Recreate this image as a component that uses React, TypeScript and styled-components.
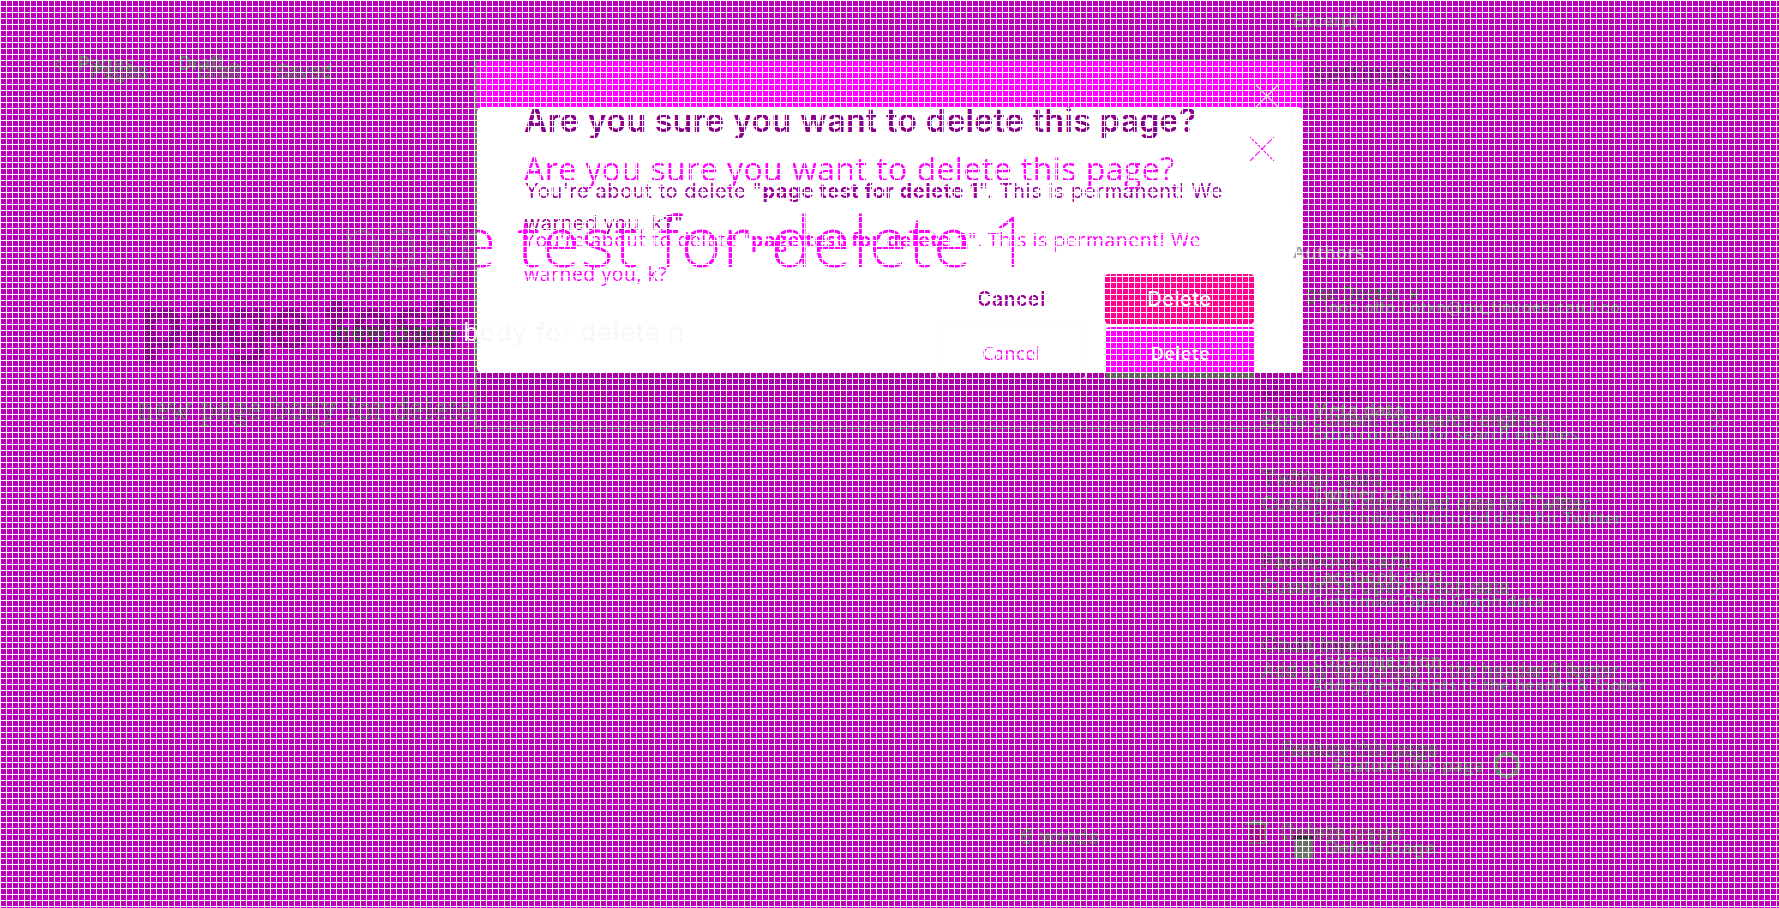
import React from "react";
import styled, { createGlobalStyle, css } from "styled-components";

const Global = createGlobalStyle`
  body { margin: 0; background: #b800b8; overflow: hidden; }
  * { box-sizing: border-box; }
`;

const gray = "#687268";
const plum = "#8b008b";

const Screen = styled.main`
  display: grid;
  width: 1779px;
  height: 908px;
  overflow: hidden;
  background: #b800b8;
  font-family: Inter, sans-serif;
`;

const Layer = styled.section<{ $top?: number; $left?: number }>`
  grid-area: 1 / 1;
  display: flex;
  flex-direction: column;
  align-items: flex-start;
  min-width: 0;
  padding: ${(p) => p.$top ?? 0}px 0 0 ${(p) => p.$left ?? 0}px;
`;

const Mesh = styled.div`
  grid-area: 1 / 1;
  z-index: 5;
  pointer-events: none;
  background-image: linear-gradient(90deg, #fff 1px, transparent 1px), linear-gradient(#fff 1px, transparent 1px);
  background-size: 6px 6px;
`;

type TextProps = {
  $size: number;
  $line: number;
  $weight?: number;
  $color?: string;
  $family?: string;
  $space?: number;
  $mt?: number;
  $ml?: number;
  $outline?: string;
};

const Text = styled.div<TextProps>`
  white-space: pre;
  font-size: ${(p) => p.$size}px;
  line-height: ${(p) => p.$line}px;
  height: ${(p) => p.$line}px;
  font-weight: ${(p) => p.$weight ?? 400};
  color: ${(p) => p.$color ?? gray};
  font-family: ${(p) => p.$family ?? "Inter"}, sans-serif;
  letter-spacing: ${(p) => p.$space ?? 0}px;
  margin: ${(p) => p.$mt ?? 0}px 0 0 ${(p) => p.$ml ?? 0}px;
  ${(p) => p.$outline && css`-webkit-text-stroke: 0.9px ${p.$outline};`}
`;

const BigTitle = styled(Text)`
  color: transparent;
  background: linear-gradient(90deg, #9a389a 138px, #ff00ff 138px);
  background-clip: text;
  -webkit-background-clip: text;
`;

const Row = styled.div<{ $gap?: number; $mt?: number }>`
  display: flex;
  align-items: center;
  gap: ${(p) => p.$gap ?? 0}px;
  margin-top: ${(p) => p.$mt ?? 0}px;
`;

const Shade = styled.div`
  width: 828px;
  height: 370px;
  border: 1px solid ${gray};
  border-left-width: 2px;
  border-right: 0;
  background: linear-gradient(#b800b8 313px, #a800a8 313px, #b800b8);
`;

const Sheet = styled.div<{ $fill: string; $height: number }>`
  width: 826px;
  height: ${(p) => p.$height}px;
  background: ${(p) => p.$fill};
  border-radius: 5px;
`;

const Button = styled.div<{ $fill?: string; $color: string; $h: number; $weight: number; $family?: string; $size: number; $border?: string }>`
  width: 149px;
  height: ${(p) => p.$h}px;
  display: flex;
  justify-content: center;
  border-radius: 4px;
  background: ${(p) => p.$fill ?? "transparent"};
  color: ${(p) => p.$color};
  font: ${(p) => p.$weight} ${(p) => p.$size}px/${(p) => p.$h}px ${(p) => p.$family ?? "Inter"}, sans-serif;
  box-shadow: ${(p) => (p.$border ? `inset 0 0 0 1px ${p.$border}` : "none")};
  letter-spacing: 0.5px;
`;

const Group = styled.div`
  height: 83.5px;
`;

const FaintBox = styled.div<{ $w: number; $h: number; $mt?: number }>`
  width: ${(p) => p.$w}px;
  height: ${(p) => p.$h}px;
  margin-top: ${(p) => p.$mt ?? 0}px;
  border: 1px solid rgba(130, 130, 130, 0.05);
  border-radius: 5px;
`;

const PanelIcon = styled.div`
  width: 24px;
  height: 21px;
  border: 1px solid #960096;
  border-right: 6px solid #850085;
`;

const Ring = styled.div`
  width: 26px;
  height: 26px;
  margin: 0 0 0 10px;
  border: 4px solid ${gray};
  border-radius: 50%;
  outline: 1px solid rgba(255, 255, 255, 0.2);
`;

const Block = styled.div`
  width: 19px;
  height: 23px;
  background: linear-gradient(#333 3px, ${gray} 3px);
`;

const Cross = ({ size, color, width = 1 }: { size: number; color: string; width?: number }) => (
  <svg width={size} height={size} viewBox="0 0 24 24" fill="none" stroke={color} strokeWidth={width} style={{ display: "block" }}>
    <path d="M0 0L24 24M24 0L0 24" />
  </svg>
);

const Chevrons = styled.div`
  display: flex;
  flex-direction: column;
  gap: 61.5px;
`;

const Chevron = ({ color, back }: { color: string; back?: boolean }) => (
  <svg width="11" height="22" viewBox="0 0 11 22" fill="none" stroke={color} strokeWidth="1.2" style={{ display: "block" }}>
    <path d={back ? "M10 1L1 11L10 21" : "M1 1L10 11L1 21"} />
  </svg>
);

const Trash = () => (
  <svg width="24" height="24" viewBox="0 0 24 24" fill="none" stroke={gray} strokeWidth="1.5">
    <path fill="#b00090" d="M4 4H20V23H4Z" />
    <path d="M0 4H24M7 4V1H17V4M9 8V19M15 8V19" />
  </svg>
);

const Help = () => (
  <svg width="24" height="24" viewBox="0 0 24 24" fill="none" stroke="#8a408a" strokeDasharray="2 3">
    <circle cx="12" cy="12" r="11" />
    <path d="M9 9C9 5 15 5 15 9C15 12 12 11 12 15M12 17V19" />
  </svg>
);

const Corners = () => (
  <svg width="28" height="26" viewBox="0 0 28 26" fill="none" stroke={gray}>
    <path d="M1 6Q1 1 6 1M22 1Q27 1 27 6M27 20Q27 25 22 25M6 25Q1 25 1 20" />
  </svg>
);

const settings = [
  ["Meta data", "Extra content for search engines"],
  ["Twitter card", "Customize structured data for Twitter"],
  ["Facebook card", "Customize Open Graph data"],
  ["Code injection", "Add styles/scripts to the header & footer"],
];

export default function App() {
  return (
    <>
      <Global />
      <Screen>
        <Layer $top={53} $left={55}>
          <Row $gap={8}>
            <Chevron color={gray} back />
            <Text $size={19} $line={22} $weight={600} $ml={4}>Pages</Text>
            <Text $size={19} $line={22} $weight={600} $ml={36}>Draft</Text>
          </Row>
          <Text $size={71} $line={80} $weight={700} $color={plum} $mt={207} $ml={85} $space={-1}>page test</Text>
          <Text $size={31} $line={40} $family="'Liberation Serif'" $outline={gray} $color={plum} $mt={27} $ml={83} $space={0.9}>new page body for delete</Text>
        </Layer>
        <Layer $top={60} $left={91}>
          <Row $gap={49}>
            <Text $size={19} $line={24} $color={plum} $outline={gray} $space={0.4}>Pages</Text>
            <Text $size={19} $line={24} $color={plum} $outline={gray}>Draft</Text>
            <Text $size={19} $line={24} $color={plum} $outline={gray} $ml={-28}>- Saved</Text>
          </Row>
        </Layer>

        <Layer $top={59} $left={475}><Shade /></Layer>
        <Layer $top={60} $left={477}><Sheet $fill="#ff00ff" $height={60} /></Layer>
        <Layer $top={107} $left={477}><Sheet $fill="#fff" $height={266} /></Layer>
        <Layer $top={107} $left={1292}>
          <FaintBox $w={28} $h={97} />
          <FaintBox $w={155} $h={58} $mt={72} />
        </Layer>

        <Layer $top={199} $left={340}>
          <BigTitle $size={70} $line={82} $weight={300} $family="'Open Sans'" $space={1.05}>page test for delete 1</BigTitle>
        </Layer>
        <Layer $top={317} $left={335}>
          <Row>
            <Text $size={24.5} $line={30} $weight={700} $color="#4a404a" $space={0.7}>new page </Text>
            <Text $size={25} $line={30} $color="#f8f3f8" $space={1.2}>body for delete n</Text>
          </Row>
        </Layer>

        <Layer $top={101} $left={524}>
          <Text $size={32} $line={40} $weight={600} $color="#8a008a" $space={0.4}>Are you sure you want to delete this page?</Text>
          <Text $size={20} $line={32} $color="#a000a0" $mt={34} $ml={1} $space={0.6}>You're about to delete "<b>page test for delete 1</b>". This is permanent! We</Text>
          <Text $size={20} $line={32} $color="#a000a0" $space={0.4}>warned you, k?"</Text>
        </Layer>
        <Layer $top={149} $left={524}>
          <Text $size={32} $line={40} $family="'Open Sans'" $weight={500} $color="#ff00ff" $space={0.45}>Are you sure you want to delete this page?</Text>
          <Text $size={19.4} $line={34} $family="'Open Sans'" $color="#ff00ff" $mt={34} $space={0.57}>You're about to delete "<b>page test for delete 1</b>". This is permanent! We</Text>
          <Text $size={19.4} $line={34} $family="'Open Sans'" $color="#ff00ff" $space={0.57}>warned you, k?</Text>
        </Layer>
        <Layer $top={274} $left={937}>
          <Row $gap={19}>
            <Button $h={50} $size={19.5} $weight={600} $color="#9a009a">Cancel</Button>
            <Button $h={50} $size={20} $weight={500} $fill="#ff0090" $color="#fff">Delete</Button>
          </Row>
          <Row $gap={20} $mt={3}>
            <Button $h={52} $size={18} $weight={400} $color="#ff00ff" $border="#fafafc" $family="'Open Sans'">Cancel</Button>
            <Button $h={52} $size={18} $weight={600} $fill="linear-gradient(#ff00ff 2px, #fff 2px, #fff 3px, #ff00ff 3px, #ff00ff 45px, #606060 45px)" $color="#fff" $family="'Open Sans'">Delete</Button>
          </Row>
        </Layer>
        <Layer $top={85} $left={1256}><Cross size={22} color="#d9e4d9" width={1.5} /></Layer>
        <Layer $top={137} $left={1250}><Cross size={24} color="#ff00ff" width={1.2} /></Layer>

        <Layer $top={10} $left={1293}>
          <Text $size={17.5} $line={22} $weight={600} $color="#787078">Excerpt</Text>
          <Row $mt={27} $gap={281}>
            <Text $size={24} $line={30} $weight={700} $color={plum} $outline="#80407f" $ml={20} $space={0.8}>settings</Text>
            <PanelIcon />
          </Row>
          <Text $size={18} $line={24} $family="'Open Sans'" $weight={600} $color="#a0a0a0" $mt={151} $space={0.3}>Authors</Text>
          <Text $size={18} $line={22} $weight={600} $color="#505850" $mt={19} $ml={13}>gsc Dost.o  ×</Text>
          <Text $size={16} $line={18} $weight={500} $color="#757a75" $ml={26} $mt={-7} $space={0.5}>Jooo.otto.Lotxn@pu_finvoes.cau.l.co</Text>
        </Layer>

        <Layer $top={381} $left={1262}>
          {settings.map(([title, note], i) => (
            <Group key={title}>
              <Text $size={20} $line={26} $weight={600} $color={plum} $outline={i ? gray : undefined} $space={0.5}>{title}</Text>
              <Text $size={18} $line={26} $color={plum} $outline={gray} $space={0.3}>{note}</Text>
            </Group>
          ))}
          <Row $gap={10} $mt={22}>
            <Corners />
            <Text $size={19} $line={26} $weight={500} $color={plum} $outline={gray} $ml={-19}>Feature this page</Text>
          </Row>
        </Layer>
        <Layer $top={396} $left={1312}>
          {settings.map(([title, note]) => (
            <Group key={title}>
              <Text $size={18.5} $line={26} $family="'Open Sans'" $weight={600} $color="#727872" $space={0.2}>{title}</Text>
              <Text $size={17} $line={24} $family="'Open Sans'" $weight={600} $color="#607573">{note}</Text>
            </Group>
          ))}
          <Row $mt={22}>
            <Text $size={18} $line={24} $family="'Open Sans'" $weight={600} $ml={21}>Feature this page</Text>
            <Ring />
          </Row>
        </Layer>
        <Layer $top={398} $left={1711}><Chevrons>{settings.map((s) => <Chevron key={s[0]} color="#a000a0" />)}</Chevrons></Layer>
        <Layer $top={408} $left={1711}><Chevrons>{settings.map((s) => <Chevron key={s[0]} color={gray} />)}</Chevrons></Layer>
        <Layer $top={819} $left={1245}>
          <Row $gap={12}>
            <Trash />
            <Text $size={20} $line={26} $weight={500} $color="#a80080" $outline={gray} $space={0.6}>Delete page</Text>
          </Row>
        </Layer>
        <Layer $top={834} $left={1294}>
          <Row $gap={12}>
            <Block />
            <Text $size={18.5} $line={26} $weight={700} $space={0.3}>Delete page</Text>
          </Row>
        </Layer>
        <Layer $top={824} $left={1021}>
          <Row $gap={23}>
            <Text $size={20} $line={26} $color={plum} $outline={gray} $space={0.3}>6 words</Text>
            <Help />
          </Row>
        </Layer>
        <Mesh />
      </Screen>
    </>
  );
}
